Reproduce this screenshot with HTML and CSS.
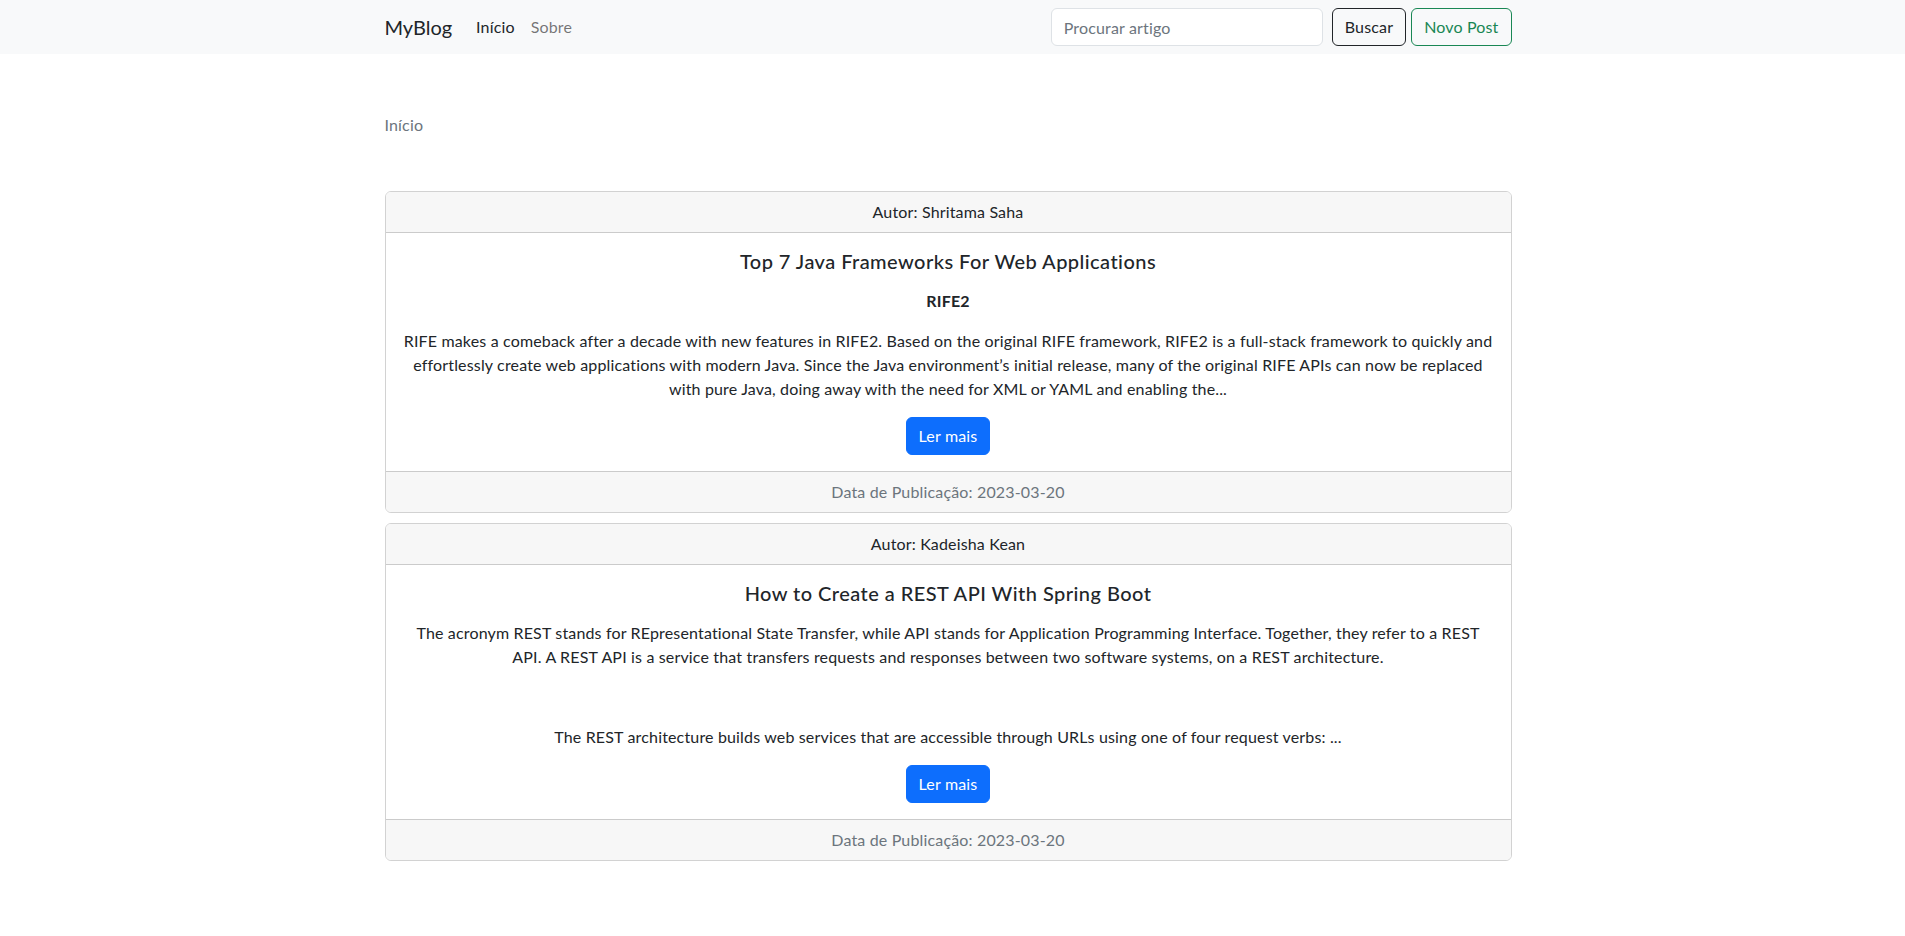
FILE: index.html
```html
<!DOCTYPE html>
<html lang="pt-BR">
<head>
<meta charset="utf-8">
<title>MyBlog</title>
<link rel="stylesheet" href="styles.css">
</head>
<body>
<nav class="navbar">
  <div class="wrap nav-inner">
    <a class="brand" href="#">MyBlog</a>
    <ul class="nav-links">
      <li><a class="nav-link active" href="#">Início</a></li>
      <li><a class="nav-link" href="#">Sobre</a></li>
    </ul>
    <form class="search">
      <input class="search-input" type="search" placeholder="Procurar artigo">
      <button class="btn btn-dark-outline" type="button">Buscar</button>
      <a class="btn btn-success-outline" href="#">Novo Post</a>
    </form>
  </div>
</nav>

<main class="wrap">
  <div class="breadcrumb">Início</div>

  <article class="card">
    <div class="card-header">Autor: Shritama Saha</div>
    <div class="card-body">
      <h5 class="card-title">Top 7 Java Frameworks For Web Applications</h5>
      <p><strong>RIFE2</strong></p>
      <p>RIFE makes a comeback after a decade with new features in RIFE2. Based on the original RIFE framework, RIFE2 is a full-stack framework to quickly and effortlessly create web applications with modern Java. Since the Java environment’s initial release, many of the original RIFE APIs can now be replaced with pure Java, doing away with the need for XML or YAML and enabling the...</p>
      <a class="btn btn-primary" href="#">Ler mais</a>
    </div>
    <div class="card-footer">Data de Publicação: 2023-03-20</div>
  </article>

  <article class="card">
    <div class="card-header">Autor: Kadeisha Kean</div>
    <div class="card-body">
      <h5 class="card-title">How to Create a REST API With Spring Boot</h5>
      <p>The acronym REST stands for REpresentational State Transfer, while API stands for Application Programming Interface. Together, they refer to a REST API. A REST API is a service that transfers requests and responses between two software systems, on a REST architecture.</p>
      <p><br></p>
      <p>The REST architecture builds web services that are accessible through URLs using one of four request verbs: ...</p>
      <a class="btn btn-primary" href="#">Ler mais</a>
    </div>
    <div class="card-footer">Data de Publicação: 2023-03-20</div>
  </article>
</main>
</body>
</html>
```
FILE: styles.css
```css
* { box-sizing: border-box; }
html, body { margin: 0; padding: 0; }
body {
  font-family: Lato, "Liberation Sans", sans-serif;
  font-size: 16px;
  line-height: 24px;
  letter-spacing: 0.16px;
  color: #212529;
  background: #fff;
}
a { text-decoration: none; }
p { margin: 0 0 16px; }

.wrap {
  width: 1127px;
  margin-left: calc(50% - 568px);
}

.navbar {
  background: #f8f9fa;
  padding: 8px 0;
}
.nav-inner {
  display: flex;
  align-items: center;
  height: 38px;
}
.brand {
  font-size: 20px;
  line-height: 30px;
  color: #212529;
  margin-right: 16px;
  letter-spacing: 0;
}
.nav-links {
  display: flex;
  list-style: none;
  margin: 0;
  padding: 0;
  flex: 1;
}
.nav-link {
  display: block;
  padding: 0 8px;
  color: rgba(0,0,0,.55);
}
.nav-link.active { color: #212529; }

.search {
  display: flex;
  align-items: center;
  margin: 0;
}
.search-input {
  width: 272px;
  height: 38px;
  padding: 6px 12px;
  font: inherit;
  letter-spacing: inherit;
  color: #212529;
  border: 1px solid #dee2e6;
  border-radius: 6px;
  background: #fff;
  margin-right: 9px;
}
.search-input::placeholder { color: #6c757d; }

.btn {
  display: inline-block;
  font: inherit;
  letter-spacing: inherit;
  line-height: 24px;
  padding: 6px 12px;
  border: 1px solid transparent;
  border-radius: 6px;
  background: transparent;
  text-align: center;
  cursor: pointer;
}
.btn-dark-outline {
  color: #212529;
  border-color: #212529;
  margin-right: 5px;
}
.btn-success-outline {
  color: #198754;
  border-color: #198754;
}
.btn-primary {
  color: #fff;
  background: #0d6efd;
  border-color: #0d6efd;
}

.breadcrumb {
  color: #6c757d;
  margin: 59px 0 54px;
}

.card {
  border: 1px solid rgba(0,0,0,.175);
  border-radius: 6px;
  margin-bottom: 10px;
  text-align: center;
  overflow: hidden;
}
.card-header {
  background: #f7f7f7;
  padding: 8px 16px;
  border-bottom: 1px solid rgba(0,0,0,.175);
}
.card-body {
  padding: 16px;
}
.card-title {
  font-size: 20px;
  font-weight: 500;
  line-height: 24px;
  letter-spacing: 0.45px;
  margin: 0 0 16px;
}
.card-footer {
  background: #f7f7f7;
  padding: 8px 16px;
  border-top: 1px solid rgba(0,0,0,.175);
  color: #6c757d;
}
```
